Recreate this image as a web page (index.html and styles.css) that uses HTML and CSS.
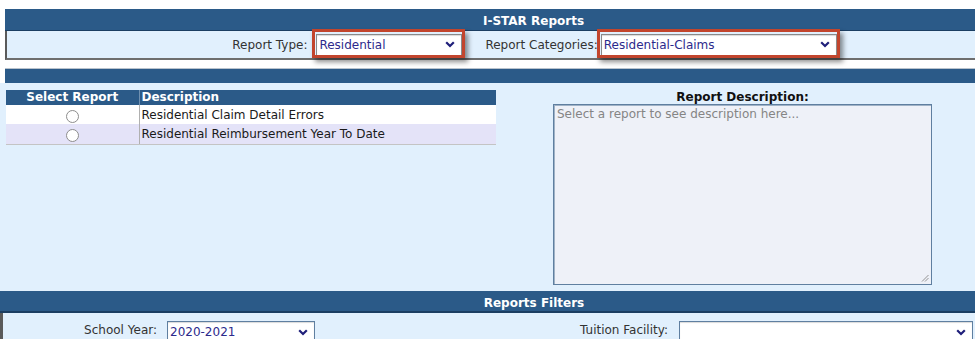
FILE: index.html
```html
<!DOCTYPE html>
<html>
<head>
<meta charset="utf-8">
<title>I-STAR Reports</title>
<link rel="stylesheet" href="styles.css">
</head>
<body>
<div class="page">
  <section class="top">
    <div class="bar title">I-STAR Reports</div>
    <div class="criteria">
      <span class="lbl lbl-type">Report Type:</span>
      <div class="sel sel-type marked"><span class="val">Residential</span><svg class="chev" viewBox="0 0 10 7" width="10" height="7"><polyline points="1.2,1.2 5,5 8.8,1.2" fill="none" stroke="#1f1f7a" stroke-width="2.2"/></svg></div>
      <span class="lbl lbl-cat">Report Categories:</span>
      <div class="sel sel-cat marked"><span class="val">Residential-Claims</span><svg class="chev" viewBox="0 0 10 7" width="10" height="7"><polyline points="1.2,1.2 5,5 8.8,1.2" fill="none" stroke="#1f1f7a" stroke-width="2.2"/></svg></div>
    </div>
  </section>
  <div class="bar midbar"></div>
  <section class="content">
    <div class="reports">
      <table class="rtable">
        <thead>
          <tr><th class="c1">Select Report</th><th class="c2">Description</th></tr>
        </thead>
        <tbody>
          <tr class="r1"><td class="c1"><span class="radio"></span></td><td class="c2">Residential Claim Detail Errors</td></tr>
          <tr class="r2"><td class="c1"><span class="radio"></span></td><td class="c2">Residential Reimbursement Year To Date</td></tr>
        </tbody>
      </table>
    </div>
    <div class="desc">
      <div class="dlabel">Report Description:</div>
      <div class="textarea"><span class="ph">Select a report to see description here...</span>
        <svg class="grip" viewBox="0 0 8 8" width="8" height="8"><line x1="1" y1="7.5" x2="7.5" y2="1" stroke="#888" stroke-width="0.9"/><line x1="4" y1="7.5" x2="7.5" y2="4" stroke="#888" stroke-width="0.9"/></svg>
      </div>
    </div>
  </section>
  <section class="filters">
    <div class="bar title ftitle">Reports Filters</div>
    <div class="frow">
      <span class="flbl flbl1">School Year:</span>
      <div class="sel fsel1"><span class="val">2020-2021</span><svg class="chev" viewBox="0 0 10 7" width="10" height="7"><polyline points="1.2,1.2 5,5 8.8,1.2" fill="none" stroke="#1f1f7a" stroke-width="2.2"/></svg></div>
      <span class="flbl flbl2">Tuition Facility:</span>
      <div class="sel fsel2"><span class="val"></span><svg class="chev" viewBox="0 0 10 7" width="10" height="7"><polyline points="1.2,1.2 5,5 8.8,1.2" fill="none" stroke="#1f1f7a" stroke-width="2.2"/></svg></div>
    </div>
  </section>
</div>
</body>
</html>
```

FILE: styles.css
```css
* { box-sizing: border-box; }
html, body { margin: 0; background: #ffffff; overflow: hidden; }
body {
  font-family: "DejaVu Sans", sans-serif;
  font-size: 12px;
  color: #222;
}
.page { width: 1070px; padding-top: 9px; }

.bar { background: #2b5a88; color: #fff; font-weight: bold; text-align: center; }
.title { height: 22px; padding-top: 4px; line-height: 16px; border-bottom: 1px solid #1b3e62; }

.top { margin-left: 5px; width: 1057px; }
.criteria {
  height: 29px;
  background: #e1f0fd;
  border-left: 2px solid #5a5a5a;
  border-bottom: 2px solid #6e6e6e;
  display: flex;
  align-items: center;
  justify-content: center;
  color: #333;
}
.lbl-type { margin-right: 9px; }
.lbl-cat { margin-left: 23px; margin-right: 3px; }

.sel {
  position: relative;
  display: flex;
  align-items: center;
  justify-content: space-between;
  height: 22px;
  padding: 0 6px 0 2px;
  background: #fff;
  border: 1px solid #8a8a8a;
  box-shadow: inset 0 1px 1px rgba(0,0,0,0.15);
  color: #2c2a8c;
}
.sel-type { width: 146px; }
.sel-cat { width: 236px; }
.chev { flex: none; }
.marked::after {
  content: "";
  position: absolute;
  left: -5px; right: -4px; top: -6px; bottom: -3px;
  border: 3px solid #c2452d;
  box-shadow: 3px 4px 5px rgba(0,0,0,0.45);
  pointer-events: none;
}

.midbar { margin-top: 8px; margin-left: 5px; height: 15px; border-top: 1px solid #b9c3cd; }

.content {
  height: 208px;
  background: #e1f0fd;
  display: flex;
  padding-left: 6px;
}
.reports { width: 490px; padding-top: 7px; }
.rtable { width: 490px; border-collapse: collapse; }
.rtable th {
  background: #2b5a88;
  color: #fff;
  font-weight: bold;
  height: 15px;
  line-height: 13px;
  padding: 0 2px;
}
.rtable th.c1 { width: 133px; text-align: center; border-right: 1px solid #7090b0; }
.rtable th.c2 { text-align: left; }
.rtable td { padding: 0 2px; color: #1a1a1a; }
.rtable td.c1 { text-align: center; border-right: 1px solid #b0b0b0; }
.rtable tr.r1 td { height: 19px; background: #ffffff; }
.rtable tr.r2 td { height: 20px; background: #e4e3f8; border-bottom: 1px solid #c4c4c4; }
.radio {
  display: inline-block;
  width: 13px; height: 13px;
  border: 1px solid #8d8d8d;
  border-radius: 50%;
  background: #fff;
  vertical-align: middle;
  margin-top: 3px;
}

.desc { margin-left: 57px; width: 379px; }
.dlabel { height: 21px; padding-top: 7px; line-height: 14px; text-align: center; font-weight: bold; color: #111; }
.textarea {
  position: relative;
  height: 181px;
  background: #eef1f8;
  border: 1px solid #5f7fa0;
  box-shadow: inset 1px 1px 0 #9fb2c6;
  padding: 2px 3px;
  color: #858585;
}
.grip { position: absolute; right: 2px; bottom: 2px; }

.filters { width: 1068px; }
.ftitle { height: 22px; border-bottom: 2px solid #1b3e62; }
.frow {
  height: 30px;
  background: #e1f0fd;
  border-left: 3px solid #5a5a5a;
  display: flex;
  align-items: flex-start;
  padding-top: 8px;
  color: #333;
}
.flbl { text-align: right; line-height: 18px; }
.flbl1 { width: 154px; }
.fsel1 { margin-left: 10px; width: 148px; }
.flbl2 { width: 353px; }
.fsel2 { margin-left: 11px; width: 294px; }
.fsel1, .fsel2 { height: 22px; border-color: #5f7fa0; }
```
